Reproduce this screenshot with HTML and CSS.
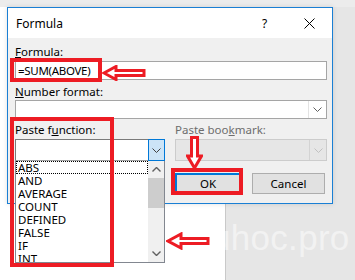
FILE: index.html
```html
<!DOCTYPE html>
<html>
<head>
<meta charset="utf-8">
<link rel="stylesheet" href="styles.css">
</head>
<body>
<div class="screen">
  <div class="dialog">
    <div class="titlebar">
      <span class="title">Formula</span>
      <span class="help">?</span>
      <svg class="close" width="11" height="11" viewBox="0 0 11 11"><path d="M0.5 0.5 L10.5 10.5 M10.5 0.5 L0.5 10.5" stroke="#000" stroke-width="1" fill="none"/></svg>
    </div>
    <div class="body">
      <div class="lbl"><u>F</u>ormula:</div>
      <div class="textbox">=SUM(ABOVE)</div>
      <div class="lbl lbl2"><u>N</u>umber format:</div>
      <div class="combo">
        <span class="combo-text"></span>
        <span class="combo-btn"><svg width="9" height="5" viewBox="0 0 9 5"><polyline points="0.5,0.5 4.5,4.5 8.5,0.5" fill="none" stroke="#606060"/></svg></span>
      </div>
      <div class="cols">
        <div class="col-left">
          <div class="lbl lbl3">Paste f<u>u</u>nction:</div>
          <div class="combo combo-fn">
            <span class="combo-text"></span>
            <span class="combo-btn hot"><svg width="9" height="5" viewBox="0 0 9 5"><polyline points="0.5,0.5 4.5,4.5 8.5,0.5" fill="none" stroke="#404040"/></svg></span>
          </div>
          <div class="list">
            <div class="items">
              <div class="item focus">ABS</div>
              <div class="item">AND</div>
              <div class="item">AVERAGE</div>
              <div class="item">COUNT</div>
              <div class="item">DEFINED</div>
              <div class="item">FALSE</div>
              <div class="item">IF</div>
              <div class="item">INT</div>
            </div>
            <div class="scrollbar">
              <span class="sb-arrow"><svg width="9" height="5" viewBox="0 0 9 5"><polyline points="0.5,4.5 4.5,0.5 8.5,4.5" fill="none" stroke="#606060" stroke-width="1.4"/></svg></span>
              <span class="sb-thumb"></span>
              <span class="sb-track"></span>
              <span class="sb-arrow"><svg width="9" height="5" viewBox="0 0 9 5"><polyline points="0.5,0.5 4.5,4.5 8.5,0.5" fill="none" stroke="#606060" stroke-width="1.4"/></svg></span>
            </div>
          </div>
        </div>
        <div class="col-right">
          <div class="lbl lbl3 disabled">Paste boo<u>k</u>mark:</div>
          <div class="combo combo-dis">
            <span class="combo-text"></span>
            <span class="combo-btn"><svg width="9" height="5" viewBox="0 0 9 5"><polyline points="0.5,0.5 4.5,4.5 8.5,0.5" fill="none" stroke="#c0c0c0"/></svg></span>
          </div>
          <div class="buttons">
            <div class="btn btn-ok">OK</div>
            <div class="btn btn-cancel">Cancel</div>
          </div>
        </div>
      </div>
    </div>
  </div>

  <div class="watermark">tuhoc.pro</div>

  <div class="mark box1"></div>
  <div class="mark box2"></div>
  <div class="mark box3"></div>
  <svg class="mark arrow1" width="44" height="16" viewBox="0 0 44 16"><polygon points="2,8 14,1.5 14,5.5 42,5.5 42,10.5 14,10.5 14,14.5" fill="#fff" stroke="#ed1c24" stroke-width="3" stroke-linejoin="miter"/></svg>
  <svg class="mark arrow2" width="17" height="34" viewBox="0 0 17 34"><polygon points="5.5,1.5 11.5,1.5 11.5,20 15.5,20 8.5,32 1.5,20 5.5,20" fill="#fff" stroke="#ed1c24" stroke-width="3"/></svg>
  <svg class="mark arrow3" width="44" height="18" viewBox="0 0 44 18"><polygon points="2,9 15,2 15,6.5 42,6.5 42,11.5 15,11.5 15,16" fill="#fff" stroke="#ed1c24" stroke-width="3"/></svg>
</div>
</body>
</html>
```

FILE: styles.css
```css
* { box-sizing: border-box; }
html, body { margin: 0; padding: 0; }
body {
  font-family: "Segoe UI", "Noto Sans", "Liberation Sans", sans-serif;
  font-size: 11.5px;
  color: #000;
}
.screen {
  position: relative;
  width: 355px;
  height: 280px;
  overflow: hidden;
  padding: 7px 0 0 7px;
  background:
    linear-gradient(to bottom, #ececec 0, #ececec 7px, transparent 7px),
    linear-gradient(to right, #ffffff 0, #ffffff 225px, #c9c9c9 225px, #c9c9c9 226px, #e6e6e6 226px);
}
.dialog {
  width: 326px;
  height: 197px;
  border: 1px solid #1a7fd4;
  background: #f0f0f0;
  box-shadow: 0 0 5px rgba(0,0,0,0.12);
}
.titlebar {
  height: 30px;
  background: #fff;
  display: flex;
  align-items: center;
  padding-left: 8px;
}
.title { flex: 1; font-size: 12px; }
.help { font-size: 12px; width: 8px; margin-right: 34px; }
.close { margin-right: 17px; }
.body {
  padding: 7px 5px 0 7px;
}
.lbl {
  height: 14px;
  line-height: 14px;
}
.lbl u { text-decoration-thickness: 1px; text-underline-offset: 1px; }
.textbox {
  margin-top: 2px;
  height: 19px;
  border: 1px solid #a5a5a5;
  background: #fff;
  padding-left: 2px;
  line-height: 17px;
  letter-spacing: -0.3px;
}
.lbl2 { margin-top: 5px; }
.combo {
  margin-top: 1px;
  height: 19px;
  border: 1px solid #a5a5a5;
  background: #fff;
  display: flex;
}
.combo-text { flex: 1; }
.combo-btn {
  width: 18px;
  display: flex;
  align-items: center;
  justify-content: center;
  border-left: 1px solid #e3e3e3;
}
.cols {
  display: flex;
  gap: 10px;
  margin-top: 4px;
}
.col-left { width: 150px; }
.col-right { width: 152px; display: flex; flex-direction: column; }
.lbl3 { margin-bottom: 2px; }
.disabled { color: #6d6d6d; }
.combo-fn { margin-top: 0; height: 22px; border-color: #7a7a7a; }
.combo-fn .combo-btn.hot {
  width: 17px;
  margin: -1px -1px -1px 0;
  border: 1px solid #0078d7;
  background: #cce4f7;
}
.combo-dis {
  margin-top: 0;
  height: 22px;
  border-color: #cccccc;
  background: #e6e6e6;
}
.combo-dis .combo-btn { border-left: 1px solid #d3d3d3; width: 17px; }
.list {
  margin-top: -1px;
  height: 103px;
  border: 1px solid #828790;
  border-top-color: #a0a0a0;
  background: #fff;
  display: flex;
  overflow: hidden;
}
.items { flex: 1; }
.item {
  height: 13px;
  line-height: 13px;
  padding-left: 2px;
}
.item.focus { outline: 1px dotted #000; outline-offset: -1px; }
.scrollbar {
  width: 16px;
  background: #f0f0f0;
  display: flex;
  flex-direction: column;
  align-items: center;
}
.sb-arrow {
  height: 17px;
  display: flex;
  align-items: center;
  justify-content: center;
}
.sb-thumb { width: 16px; height: 30px; background: #cdcdcd; }
.sb-track { flex: 1; }
.buttons {
  display: flex;
  margin-top: 12px;
  gap: 11px;
}
.btn {
  height: 21px;
  background: #e1e1e1;
  border: 1px solid #adadad;
  text-align: center;
  line-height: 19px;
}
.btn-ok { width: 66px; border: 2px solid #0078d7; line-height: 17px; }
.btn-cancel { width: 73px; }

.watermark {
  position: absolute;
  left: 201px;
  top: 218px;
  font-family: "Liberation Sans", Arial, sans-serif;
  font-size: 35px;
  color: rgba(255,255,255,0.5);
  letter-spacing: 0.3px;
}
.mark { position: absolute; }
.box1 { left: 10px; top: 58px; width: 92px; height: 24px; border: 4px solid #ed1c24; }
.box2 { left: 10px; top: 117px; width: 104px; height: 150px; border: 4px solid #ed1c24; }
.box3 { left: 171px; top: 168px; width: 72px; height: 27px; border: 4px solid #ed1c24; }
.arrow1 { left: 102px; top: 65px; }
.arrow2 { left: 186px; top: 136px; }
.arrow3 { left: 166px; top: 232px; }
```
